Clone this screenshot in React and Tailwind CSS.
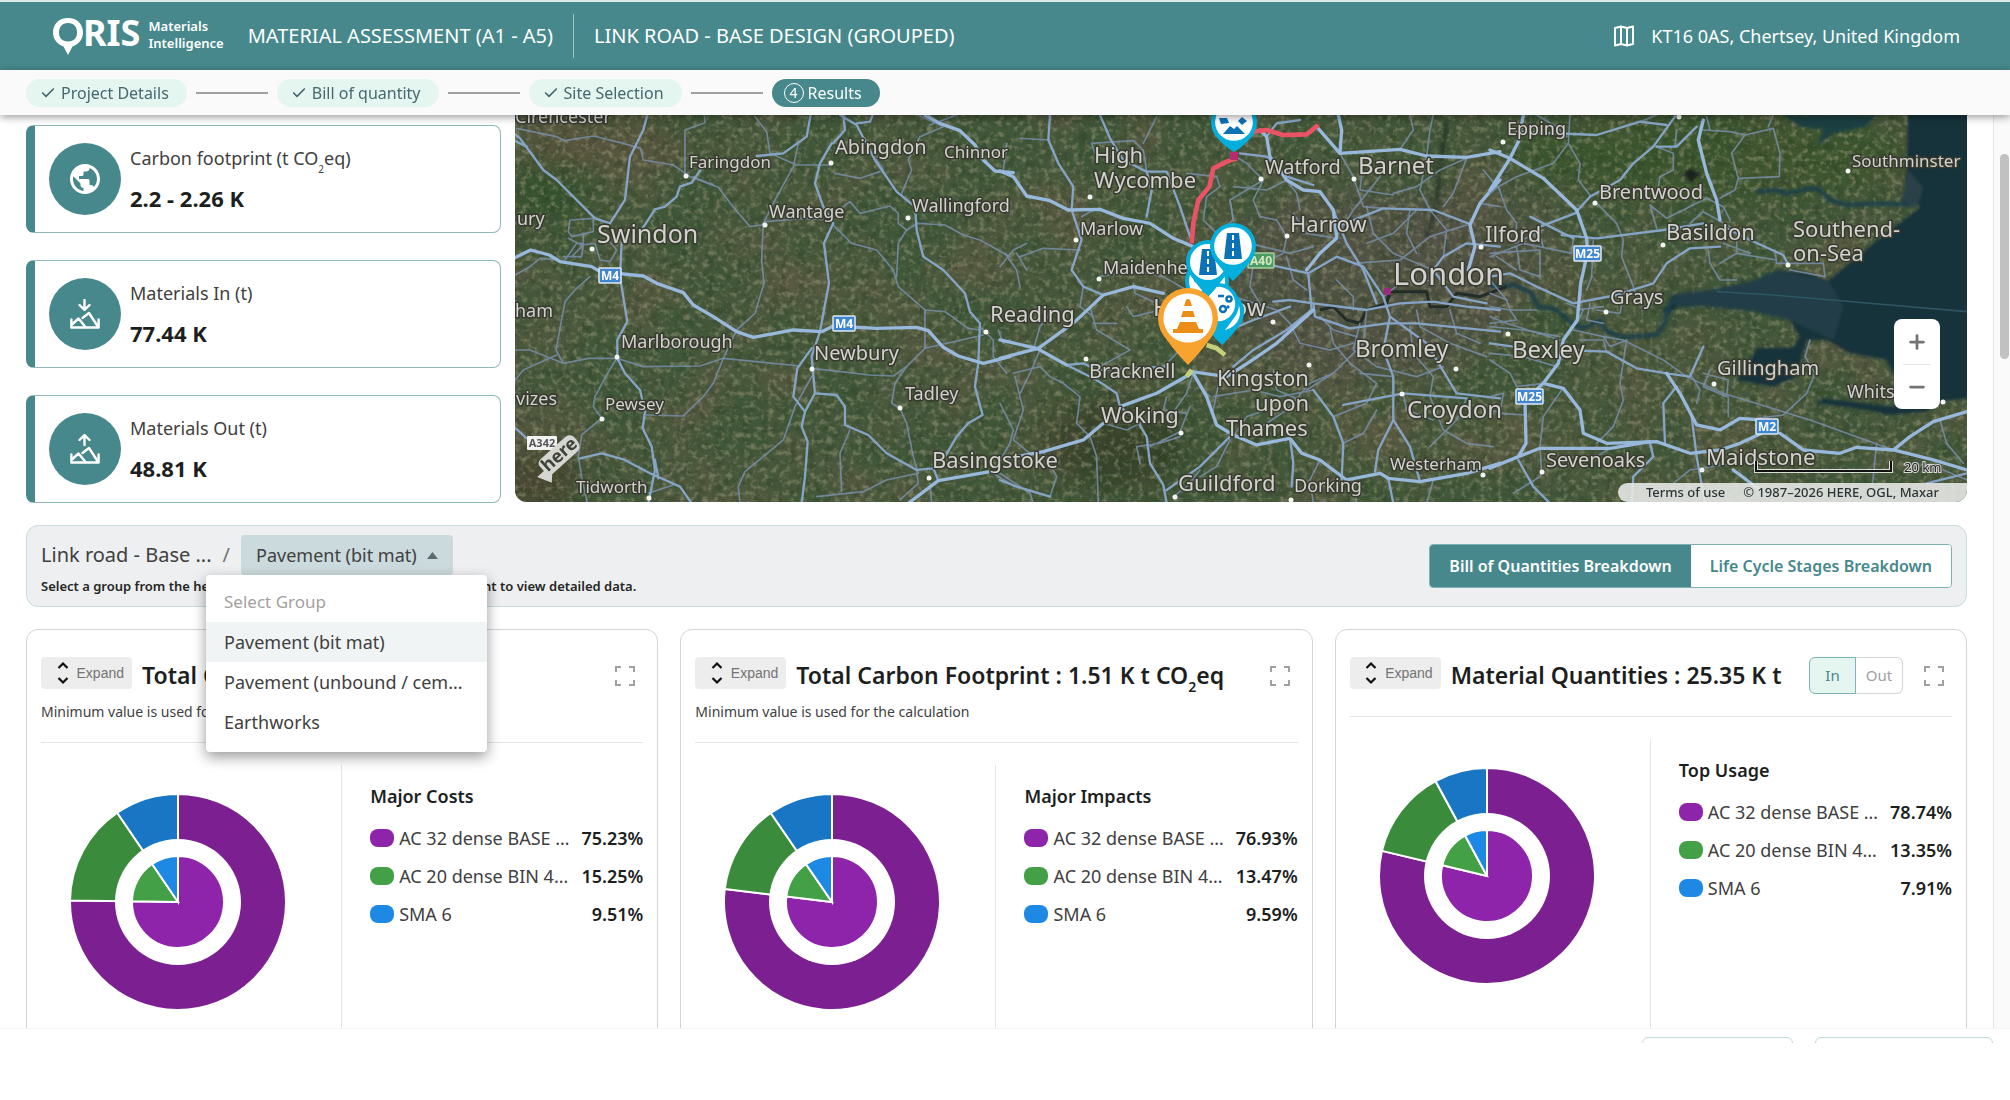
import {useState} from 'react'
import {MdPublic} from 'react-icons/md'
import {Check, Plus, Minus} from 'lucide-react'

const steps = ['Project Details', 'Bill of quantity', 'Site Selection']

const groups = ['Pavement (bit mat)', 'Pavement (unbound / cement)', 'Earthworks']

const colors = [
  { outer: '#7b1f91', inner: '#8e24aa', dot: 'bg-[#8e24aa]' },
  { outer: '#3b8b3d', inner: '#43a047', dot: 'bg-[#43a047]' },
  { outer: '#1976c5', inner: '#1e88e5', dot: 'bg-[#1e88e5]' },
]

const materials = ['AC 32 dense BASE 40/60', 'AC 20 dense BIN 40/60', 'SMA 6']

const CO2 = () => <>CO<sub className="text-[10px] leading-none -bottom-2">2</sub></>

const charts = [
  { id: 'cost', title: 'Total Cost : 1.2 M £', note: true, legend: 'Major Costs', values: [75.23, 15.25, 9.51] },
  { id: 'carbon', title: <>Total Carbon Footprint : 1.51 K t CO<sub className="text-sm leading-none -bottom-2">2</sub>eq</>, note: true, legend: 'Major Impacts', values: [76.93, 13.47, 9.59] },
  { id: 'quantities', title: 'Material Quantities : 25.35 K t', note: false, legend: 'Top Usage', values: [78.74, 13.35, 7.91] },
]

// [name, x, y, size class]
const places = [
  ['Cirencester', 0, 8, 'text-[18px]'],
  ['Faringdon', 174, 53, 'text-[17px]'],
  ['Abingdon', 320, 39, 'text-[20px]'],
  ['Chinnor', 429, 43, 'text-[17px]'],
  ['ury', 2, 110, 'text-[18px]'],
  ['Swindon', 82, 128, 'text-[25px]'],
  ['Wantage', 254, 103, 'text-[18px]'],
  ['Wallingford', 397, 97, 'text-[18px]'],
  ['ham', 0, 202, 'text-[18px]'],
  ['Marlborough', 106, 233, 'text-[18px]'],
  ['Newbury', 299, 245, 'text-[20px]'],
  ['vizes', 1, 290, 'text-[18px]'],
  ['Pewsey', 90, 295, 'text-[17px]'],
  ['Tadley', 390, 285, 'text-[18px]'],
  ['Tidworth', 61, 378, 'text-[17px]'],
  ['Basingstoke', 417, 353, 'text-[22px]'],
  ['Reading', 475, 207, 'text-[22px]'],
  ['High', 579, 48, 'text-[22px]'],
  ['Wycombe', 579, 73, 'text-[22px]'],
  ['Marlow', 565, 120, 'text-[18px]'],
  ['Maidenhead', 588, 159, 'text-[18px]'],
  ['Harrow', 775, 117, 'text-[22px]'],
  ['Watford', 750, 59, 'text-[20px]'],
  ['Barnet', 843, 59, 'text-[24px]'],
  ['London', 878, 170, 'text-[31px]'],
  ['Hounslow', 638, 201, 'text-[24px]'],
  ['Bracknell', 574, 263, 'text-[20px]'],
  ['Woking', 586, 308, 'text-[22px]'],
  ['Kingston', 702, 271, 'text-[22px]'],
  ['upon', 740, 296, 'text-[22px]'],
  ['Thames', 711, 321, 'text-[22px]'],
  ['Bromley', 840, 242, 'text-[24px]'],
  ['Croydon', 892, 303, 'text-[24px]'],
  ['Westerham', 875, 355, 'text-[17px]'],
  ['Guildford', 663, 376, 'text-[22px]'],
  ['Dorking', 779, 377, 'text-[18px]'],
  ['Ilford', 970, 127, 'text-[22px]'],
  ['Epping', 992, 20, 'text-[18px]'],
  ['Southminster', 1337, 52, 'text-[17px]'],
  ['Brentwood', 1084, 84, 'text-[20px]'],
  ['Basildon', 1151, 125, 'text-[22px]'],
  ['Southend-', 1278, 122, 'text-[22px]'],
  ['on-Sea', 1278, 146, 'text-[22px]'],
  ['Grays', 1095, 189, 'text-[20px]'],
  ['Bexley', 997, 243, 'text-[24px]'],
  ['Gillingham', 1202, 260, 'text-[20px]'],
  ['Whitstable', 1332, 283, 'text-[18px]'],
  ['Maidstone', 1191, 350, 'text-[22px]'],
  ['Sevenoaks', 1031, 352, 'text-[20px]'],
]

const towns = [
  [171, 61], [316, 48], [77, 134], [250, 110], [393, 103], [102, 242], [297, 254], [87, 304], [385, 293],
  [134, 383], [414, 363], [471, 217], [575, 82], [561, 125], [584, 164], [746, 64], [839, 64],
  [772, 121], [571, 244], [666, 318], [794, 250], [887, 279], [941, 254], [758, 207], [968, 360], [776, 385],
  [660, 382], [966, 132], [988, 27], [1164, 2], [1333, 56], [1080, 88], [1148, 130], [1273, 150], [1091, 197],
  [993, 219], [1199, 269], [1187, 355], [1027, 357], [1428, 287],
]

const shields = [
  ['M4', 84, 153, 22], ['M4', 318, 201, 22], ['M25', 1059, 131, 27], ['M25', 1001, 274, 27], ['M2', 1241, 304, 22],
]

// Roads are kept per map tile, each tile is 500 units wide at three times the map scale
const tiles = [
  {
    x: -5,
    major: [
      'M0 450 62 420 118 435 150 455 245 470 270 485 400 498 440 520 520 548 550 585 610 620 680 665 730 682 850 660 935 665 970 648 1100 655 1220 652 1255 662 1300 712 1345 738 1420 760 1500 740',
      'M1245 15 1290 40 1350 62 1395 105 1420 150 1455 183 1510 188',
      'M1195 1180 1285 1112 1440 1085',
    ],
    medium: [
      'M0 60 30 85 100 180 140 210 255 325 300 340 345 270 360 140 400 60 412 15',
      'M0 85 50 110',
      'M395 360 435 298 465 290 500 260 510 230 545 218 575 175',
      'M335 400 330 500 352 635 322 690 322 745 345 790 390 840 405 905 398 955 425 1010 435 1080 415 1180',
      'M965 100 930 160 915 220 940 290 970 340 942 400 957 520 930 665 905 740 915 850 885 905 875 950 893 995 885 1100 875 1180',
      'M740 138 820 130 890 80 902 15',
      'M990 15 1040 45 1095 150 1160 245 1215 290 1220 360 1240 440 1300 480 1365 550 1380 605 1410 640 1405 760 1395 830 1418 915 1375 940 1340 980 1305 1040',
      'M905 715 862 775 850 860 885 905M915 850 980 855 1005 890 1005 945 1075 975 1130 1030 1220 1080 1270 1075 1285 1112',
      'M210 1045 275 1030 340 1048 420 1090 510 1130 545 1180M435 1050 445 1105M0 940 50 985 M970 100 1005 60 1000 15M1040 40 1080 35 1088 15',
    ],
    minor: [
      'M20 55 140 80 165 92 250 78 340 100 392 115 400 150 490 165 540 200 625 232 665 285 720 350 755 345 765 335 880 325 960 330 1000 290 1020 275 1050 310 1140 288 1165 310 1165 340 1190 360 1225 340 1305 345 1360 375 1410 390 1500 440',
      'M525 195 525 60 585 38 583 15M735 20 770 65 780 130 860 165 960 165M865 100 850 170 795 270 760 340 755 450 762 520 735 610 680 660 640 745',
      'M185 330 250 325 250 365 185 380 175 365 180 330M175 385 215 405 255 400 270 450 300 455 320 420 290 385M165 450 200 400 220 400M185 440 220 405 215 440 160 440M220 370 220 400M240 500 195 540 165 575 150 655 138 720 160 760 235 745 320 745 400 770 570 768 640 745 870 768 M905 775 1080 795 1150 798 1190 770 1245 715 1420 675M15 720 60 720 160 760M15 810 40 780 140 735',
      'M15 495 60 470 90 445 150 450M320 745 290 795 255 860 250 890 275 925 215 975 205 1040 215 1100 232 1180M640 745 610 820 580 860 520 918 410 915M905 800 855 890 820 990 705 1085 685 1130 690 1180M970 345 1025 400 1100 420 1150 480 1165 530 1245 600 1245 715M1245 600 1305 605 1375 655 1410 660M1190 360 1165 400 1160 500M975 190 1050 205 1110 185M1100 150 1120 180M1225 15 1300 50 1230 80 1195 150 1205 180 1175 250M1260 45 1340 15',
      'M1190 770 1155 820 1145 880 1170 895 1190 940 1210 1040 1225 1090 1130 1110 1060 1145 920 1160M1220 1080 1225 1120 1170 1170M1020 960 990 1030 995 1145M1410 650 1450 690 1450 740 1490 790M1465 660 1480 700 1500 690M415 1150 490 1125M1260 1120 1265 1180M1440 1085 1500 1120M550 200 610 225',
    ],
  },
  {
    x: 485,
    major: [
      'M0 183 40 200 80 258 150 272 205 300 300 298 370 325 450 340 520 385 580 410',
      'M0 745 115 715 225 635 310 555 400 530 490 550',
      'M780 60 800 80 810 140 860 210 910 240 960 245 1000 300 1010 380M1010 385 960 430 920 480',
      'M950 50 1020 130 1200 118 1280 138 1400 142 1500 125M1020 130 1025 60 1015 15',
      'M1500 210 1440 280 1410 345 1425 410 1405 480M580 790 620 860 650 945 700 975 770 1005 870 985 905 1030 960 1050 1040 1110 1140 1090 1165 1105 1260 1115 1400 1090 1500 1060',
      'M575 790 470 850 360 890 M575 785 680 800 750 755 830 700 940 600M310 940 250 990 130 1025 0 1050M0 690 110 715 200 765',
    ],
    medium: [
      'M300 15 330 85 370 150 440 185 500 185 540 290 570 380M440 185 455 240 440 320M150 15 145 90 175 160 220 230 215 300 245 390 215 480 250 530 310 555',
      'M820 575 870 570 940 580 1100 600 1200 580 1300 575 1400 590 1500 600M940 580 945 620 1050 655 1160 640 1250 640 1500 665M690 660 760 630 870 590',
      'M790 460 925 490 935 600 860 660 760 720 700 770M925 490 1010 440 1090 470 1150 560 1170 620 1150 720 1180 800 1180 930 1135 1020 1125 1085M1165 1105 1180 1180M940 840 1000 920 1030 1000 1025 1110',
      'M200 765 250 760 290 780 500 770M360 890 350 850 290 810 200 765M360 890 410 930 440 980 450 1060 490 1125 500 1180M0 1110 50 1130 150 1160M800 80 830 40 900 30M500 1140 600 1070 690 980M870 985 880 1060 875 1130',
      'M1000 300 1040 400 1090 480 1130 580M1405 340 1300 300 1150 295 1010 350M1180 930 1230 1010 1260 1115M720 130 800 140 860 200 940 225M1500 410 1400 400 1330 440 1300 480 1360 560 1460 580M1170 620 1280 700 1370 850 1500 865M1030 885 1210 850 1400 865',
    ],
    minor: [
      'M20 100 10 180M150 90 60 85M275 100 400 92 430 120 440 185M275 100 285 130M470 20 430 100M560 190 650 200 660 230 620 260 610 330 650 370 700 330 690 270 740 240 790 210M690 130 740 160 790 210 760 270 780 320 830 330 860 380 850 430 790 460M1020 130 1060 200 1090 290 1150 295M1150 150 1140 200 1060 300 1010 380M860 210 800 240 700 230M900 300 890 250 860 210M880 310 920 370 1010 385M940 410 870 430 750 400',
      'M1280 140 1260 240 1290 300 1340 360 1330 440M1400 145 1360 250 1330 290M1200 118 1240 60 1230 15M1300 15 1290 60 1280 140M1100 290 1120 370 1180 430 1300 480M1180 250 1250 230 1320 180 1400 145M1100 400 1180 370 1250 300M1060 460 1200 450 1290 380 1400 345M1230 300 1220 370 1250 430M1450 180 1500 240M1440 280 1500 290M1090 160 1080 240 1180 255',
      'M45 800 70 900 40 990 90 1030 130 1025M40 790 120 770 150 800 190 820 240 860 230 940 270 980 290 1040 295 1180M120 720 90 790 60 850M100 720 120 650 160 600M270 590 290 660 390 720 300 770M400 520 405 550 470 580 490 600 M250 530 240 590 280 620M15 430 50 480 60 530M60 440 130 415 240 420M300 500 400 480 490 500 560 540M80 480 50 430',
      'M480 780 560 700M500 860 490 900 560 910M510 920 560 850 580 790M640 860 760 840 840 860 940 840M770 960 860 900 930 820 1000 790M820 780 830 840 900 870M700 980 740 920 800 900M630 860 600 830M450 1010 540 965 570 890M540 980 480 1000 410 1010 420 1060M600 1080 560 1130 520 1160M690 990 650 1070 600 1100M1000 920 1100 880 1130 820 1050 760 1000 700 990 650M1080 640 1060 720 1130 770 1250 800 1330 770M1230 650 1240 730 1300 800 1290 860 1330 960 1400 1000 1480 1010',
      'M960 620 1000 660 1070 680M1150 560 1200 520 1300 510M1100 600 1090 700 1000 790 920 840M870 640 900 700 990 720 1060 700M1250 600 1260 650 1350 700 1460 740M1350 600 1370 670 1440 700M1180 800 1080 790M1210 850 1220 900 1300 930M1400 865 1370 930 1290 1010M1030 1000 1090 970 1130 900M1300 1110 1280 1180M1070 1180 1060 1110M960 1050 930 1110 940 1180M1010 510 1060 560 1060 600M580 640 560 690M700 560 830 600 880 650',
      'M0 880 40 960 30 1000 0 1050M130 1025 170 1100 150 1160M0 1090 90 1150 100 1180M310 940 380 960 440 930M660 800 640 900M760 460 750 530 790 600M860 440 880 510 920 540M690 270 700 330M0 470 40 420 80 400M245 320 280 300M380 590 400 620 480 600M350 640 280 640',
    ],
  },
  {
    x: 975,
    major: [
      'M0 120 60 145 160 205 260 300 290 385 292 430 272 520 262 630 220 690 205 760 160 820 220 835 270 900 280 970 350 1000 500 995 600 1030 690 1020 750 1000 815 970',
      'M160 820 105 870 108 1000 85 1040 0 1075M85 1040 150 1015 360 1015 480 995',
      'M530 790 570 850 620 945 690 960 750 925 815 930M870 970 940 1020 1050 1030 1100 1012 1210 1020 1330 1050 1431 1080M1210 1020 1260 980 1330 935 1431 905M0 240 60 145 85 95 100 15',
      'M640 30 625 90 650 190 680 270 690 330M730 1080 810 1140',
    ],
    medium: [
      'M80 65 320 75 450 35 530 45M555 20 490 110 430 160 390 210 300 260 255 310 150 350M215 375 320 385 520 360 640 340M530 790 440 775 350 725 220 720M700 350 780 390 880 435 895 465',
      'M120 320 180 350 250 385M690 410 600 415 530 460 490 520 380 555 250 580 140 530 60 490 0 500M85 1050 130 1130 180 1180M605 920 620 1040 645 1180M620 50 560 110 500 110M1310 1120 1431 1090M480 1000 490 1040 430 1100 425 1180M525 1000 520 880 560 830M640 710 600 800 530 790M0 700 70 710',
    ],
    minor: [
      'M240 15 235 100 270 160 265 210 300 255M25 230 50 300 80 340 75 400 160 360M235 100 190 160 80 200 25 230 0 250M320 280 380 340 400 390 395 440 430 530 440 560M480 285 500 355M480 285 530 325 650 265 700 290 720 330M600 340 640 305 720 350M640 60 720 65 765 75 850 55 870 130 868 200 745 205 725 130 765 75M745 205 735 240 690 265M850 15 835 50M500 110 550 130 550 180 510 200 500 260',
      'M250 385 245 430 100 400 0 440M80 410 90 480 150 500 150 420 0 430M20 440 80 480M0 510 50 570 60 600 140 600M310 390 305 500 290 540M320 600 390 610 400 560M300 580 290 630 340 640M340 590 260 600M250 660 340 680 400 690 440 710 520 750 590 800 700 850 960 930 1210 1020M655 420 660 460 690 510 740 510M690 460 740 430 740 360M740 430 860 450M855 420 860 460 1000 460 1005 500 900 480M700 400 780 430',
      'M340 680 360 710 410 690 390 820 400 870 370 950 320 1000M215 840 160 920 150 1010 155 1090M40 850 30 910 105 915M0 860 40 850M0 900 40 910M600 790 630 840 620 880M660 780 640 830 710 860 715 810 640 790M715 860 715 920M960 690 945 740 975 790 950 850 880 915 800 925M1160 1000 1150 1100 1140 1180M1350 930 1370 1000 1420 1060M200 770 100 740 0 730M350 725 340 690 270 690M210 680 100 660 0 650M360 1015 320 1040 290 1050M1431 1110 1360 1080M155 1090 150 1100 70 1150M550 1120 600 1080 730 1060',
      'M0 550 50 570M0 590 60 600 80 630 0 640M0 620 50 640 210 690M140 15 200 50 230 80M650 20 660 60M450 35 500 15M560 60 555 110M0 750 60 790 80 830 160 820M160 410 150 380M230 580 280 600 260 640',
    ],
  },
]

const Mountains = ({ up }) => (
  <svg className="w-[30px] h-[30px]" viewBox="0 0 30 30" fill="none" stroke="currentColor" strokeWidth="2.4" strokeLinecap="round" strokeLinejoin="round">
    <path d="M1.4 20.5v8h27.2v-8" />
    <path d="M2.5 25 8.500 19.500 15.500 28M12.500 19 19 14l8.500 13" />
    <path d={up ? 'M14.500 11V1.500M9.500 6l5-4.800 5 4.800' : 'M14.500 1v9.500M9.500 6l5 4.800 5-4.800'} />
  </svg>
)

const stats = [
  { label: <>Carbon footprint (t <CO2 />eq)</>, value: '2.2 - 2.26 K', icon: <MdPublic className="w-9 h-9" /> },
  { label: 'Materials In (t)', value: '77.44 K', icon: <Mountains /> },
  { label: 'Materials Out (t)', value: '48.81 K', icon: <Mountains up /> },
]

const Pin = ({ x, y, r, tip, color, children }) => (
  <g transform={`translate(${x} ${y})`}>
    <path d={`M${-r * 0.92} ${r * 0.4}Q${-r * 0.6} ${r * 0.95} 0 ${tip}Q${r * 0.6} ${r * 0.95} ${r * 0.92} ${r * 0.4}Z`} fill={color} />
    <circle r={r} fill={color} />
    <circle r={r * 0.82} fill="#fff" />
    {children}
  </g>
)

const RoadGlyph = () => (
  <g>
    <path d="M-6-13H6L9 13H-9Z" fill="#0b72b5" />
    <path d="M0-11v5M0-3v5M0 5v5" stroke="#fff" strokeWidth="2" />
  </g>
)

const MapView = () => (
  <svg className="block w-full h-full font-['Noto_Sans',sans-serif]" viewBox="0 0 1452 387" preserveAspectRatio="xMidYMid slice" role="img" aria-label="Map of sites">
    <defs>
      <filter id="fields" x="0" y="0" width="100%" height="100%" colorInterpolationFilters="sRGB">
        <feTurbulence type="fractalNoise" baseFrequency="0.014" numOctaves="4" seed="8" />
        <feColorMatrix values="0 0 0 0 .36  0 0 0 0 .35  0 0 0 0 .26  2 0 0 0 -.75" />
      </filter>
      <filter id="grain" x="0" y="0" width="100%" height="100%" colorInterpolationFilters="sRGB">
        <feTurbulence type="fractalNoise" baseFrequency="0.17" numOctaves="3" seed="3" />
        <feColorMatrix values="0 0 0 0 .6  0 0 0 0 .6  0 0 0 0 .48  0 3.4 0 0 -1.65" />
      </filter>
      <filter id="woods" x="0" y="0" width="100%" height="100%" colorInterpolationFilters="sRGB">
        <feTurbulence type="fractalNoise" baseFrequency="0.11" numOctaves="3" seed="21" />
        <feColorMatrix values="0 0 0 0 .16  0 0 0 0 .24  0 0 0 0 .14  0 0 3 0 -1.4" />
      </filter>
      <filter id="soft"><feGaussianBlur stdDeviation="14" /></filter>
      <filter id="shore"><feGaussianBlur stdDeviation="4" /></filter>
    </defs>
    <rect width="1452" height="387" fill="#415739" />
    <rect width="1452" height="387" filter="url(#fields)" />
    <g filter="url(#soft)">
      <ellipse cx="850" cy="170" rx="150" ry="95" fill="#545146" opacity=".75" />
      <ellipse cx="970" cy="130" rx="80" ry="60" fill="#545146" opacity=".6" />
      <ellipse cx="90" cy="30" rx="90" ry="25" fill="#5b533d" opacity=".6" />
      <ellipse cx="600" cy="330" rx="70" ry="45" fill="#2c3a22" opacity=".7" />
      <ellipse cx="20" cy="365" rx="45" ry="30" fill="#4b4731" opacity=".9" />
      <ellipse cx="35" cy="80" rx="45" ry="30" fill="#2f512c" opacity=".8" />
      <ellipse cx="1200" cy="40" rx="200" ry="45" fill="#39542b" opacity=".7" />
    </g>
    <rect width="1452" height="387" filter="url(#woods)" opacity=".4" />
    <rect width="1452" height="387" filter="url(#grain)" opacity=".5" />
    <g transform="translate(975 -5) scale(.3333)">
      <g filter="url(#shore)">
        <path d="M1255-20 1250 180 1240 260 1290 290 1240 330 1150 400 1015 512 950 490 860 480 780 515 660 540 550 553 520 600 530 620 560 592 640 588 780 602 900 630 930 680 910 712 800 715 780 750 740 810 850 830 920 800 950 690 1010 690 1080 730 1190 750 1215 800 1215 890 1000 865 980 880 1130 900 1200 915 1310 905 1350 875 1460 862V-20Z" fill="#12303a" />
        <path d="M860 480 780 515 660 540 550 553 560 592 640 588 780 602 900 630 1030 690 1060 590 1015 512Z" fill="#213e47" />
        <path d="M1255 180 1300 235 1280 290 1230 290Z" fill="#2a4247" />
        <path d="M800 245 860 240 890 250 960 235 990 240 1020 270 1070 285 1180 280 1260 285M0 530 70 525 120 545 145 590 200 600 245 640 280 655 330 630 350 665 400 682 500 675 525 640 535 590 560 565" fill="none" stroke="#1d3f48" strokeWidth="13" strokeLinejoin="round" />
        <path d="M880 15 930 50 1000 60 980 110 1030 70 1130 50 1160 15Z" fill="#1d3f42" />
        <path d="M580 195 600 175 630 190 605 218Z" fill="#1c211d" />
      </g>
      <path d="M680 545 850 555 1431 605" fill="none" stroke="#2c5661" strokeWidth="5" />
    </g>
    <g transform="translate(485 -5) scale(.3333)" fill="none" stroke="#232d28" strokeLinejoin="round">
      <path d="M960 600 1000 590 1040 630 1080 640 1100 600 1160 580 1170 545 1280 545 1290 590 1340 590 1370 550 1440 560 1520 530" strokeWidth="9" />
      <path d="M1340 40 1320 180 1310 280 1280 380" stroke="#1f2a20" strokeWidth="14" opacity=".6" filter="url(#shore)" />
    </g>
    {tiles.map(tile => (
      <g key={tile.x} transform={`translate(${tile.x} -5) scale(.3333)`} fill="none" strokeLinejoin="round" strokeLinecap="round">
        {tile.minor.map(d => <path key={d} d={d} stroke="#788ea8" strokeWidth="5" opacity=".85" />)}
        {tile.medium.map(d => <path key={d} d={d} stroke="#86a5c6" strokeWidth="7" />)}
        {tile.major.map(d => <path key={d} d={d} stroke="#98b8dc" strokeWidth="10" />)}
      </g>
    ))}
    <g transform="translate(485 -5) scale(.3333)" fill="none" strokeLinejoin="round" strokeWidth="14">
      <path d="M710 145 680 155 640 175 628 230 595 270 580 340 575 400M760 65 800 60 850 75 920 73 955 45" stroke="#ea5365" />
      <path d="M620 705 650 715 675 735M575 780 560 800" stroke="#c5cf79" />
    </g>
    <rect x="715" y="37" width="8" height="8" fill="#b52b6b" />
    <rect x="869" y="173" width="7" height="7" fill="#9c2a7d" />
    {towns.map(([x, y]) => <circle key={`${x}-${y}`} cx={x} cy={y} r="2.500" fill="#f4f4f2" />)}
    <g fill="#d2d2ce" stroke="#38392f" strokeWidth="3" paintOrder="stroke" strokeLinejoin="round">
      {places.map(([name, x, y, size]) => <text key={name} x={x} y={y} className={size}>{name}</text>)}
    </g>
    {shields.map(([name, x, y, w]) => (
      <g key={`${name}-${x}`}>
        <rect x={x} y={y} width={w} height="15" rx="1" fill="#3f86d2" stroke="#dfe8ef" strokeWidth="1.500" />
        <text x={x + w / 2} y={y + 12} textAnchor="middle" fill="#fff" className="text-[12px] font-bold">{name}</text>
      </g>
    ))}
    <rect x="733" y="138" width="26" height="15" rx="1" fill="#4d9c67" stroke="#a9cf9c" strokeWidth="1.500" />
    <text x="746" y="150" textAnchor="middle" fill="#d5e8bd" className="text-[12px] font-bold">A40</text>
    <rect x="12" y="321" width="30" height="14" rx="1" fill="#f2f2f0" />
    <text x="27" y="332" textAnchor="middle" fill="#55565a" className="text-[11px] font-bold">A342</text>
    <g transform="translate(33 359) rotate(-42)">
      <path d="M-10-5H-1V-12Q0-16 5-16H38Q45-15 44-7 44 2 38 3H3L-3 9Z" fill="#d5d6d1" />
      <text x="1" y="-1" fill="#3c4438" className="text-[18px] font-bold">here</text>
    </g>

    <Pin x={719} y={7} r={23} tip={30} color="#04aedd">
      <path d="M-11 12-4 4 0 7 3 4 11 12ZM-15-4l8 0 2 5-8 1ZM8-5l5 4-5 4-4-4Z" fill="#0b72b5" />
    </Pin>
    <Pin x={692} y={166} r={22} tip={36} color="#04aedd">
      <path d="M-12-2a3 3 0 1 0 6 0M4 8h8" fill="none" stroke="#0b72b5" strokeWidth="2.500" />
    </Pin>
    <Pin x={707} y={197} r={22} tip={33} color="#04aedd" />
    <Pin x={703} y={189} r={21} tip={34} color="#04aedd">
      <g fill="none" stroke="#0b72b5" strokeWidth="2.500">
        <circle cx="5" cy="5" r="3" />
        <circle cx="11" cy="-5" r="2.500" />
        <path d="M0-8h6M9 2l2 2" />
      </g>
    </Pin>
    <Pin x={693} y={147} r={22} tip={35} color="#04aedd"><RoadGlyph /></Pin>
    <Pin x={718} y={131} r={23} tip={35} color="#04aedd"><RoadGlyph /></Pin>
    <Pin x={673} y={203} r={30} tip={47} color="#f8a32f">
      <path d="M-2-18Q0-20 2-18L4-12H-4ZM-5-7H5L7-1H-7ZM-8 4H8L11 11H15V15H-15V11H-11Z" fill="#ec8d18" />
    </Pin>

    <path d="M1241 346v10h135v-10" fill="none" stroke="#fff" strokeWidth="4" opacity=".8" />
    <path d="M1241 346v10h135v-10" fill="none" stroke="#111" strokeWidth="2" />
    <text x="1389" y="357" fill="#222" stroke="#d9d9d9" strokeWidth="2" paintOrder="stroke" className="text-[13px]">20 km</text>
  </svg>
)

const Donut = ({ values }) => {
  const total = values.reduce((a, b) => a + b, 0)
  const point = (part, r) => {
    const a = part / total * Math.PI * 2
    return `${107 + r * Math.sin(a)} ${107 - r * Math.cos(a)}`
  }
  const slice = (i, r) => {
    const start = values.slice(0, i).reduce((a, b) => a + b, 0)
    const end = start + values[i]
    return `M107 107L${point(start, r)}A${r} ${r} 0 ${values[i] / total > 0.5 ? 1 : 0} 1 ${point(end, r)}Z`
  }
  return (
    <svg className="w-[214px] h-[214px] overflow-visible" viewBox="0 0 214 214" aria-hidden="true">
      {values.map((v, i) => <path key={i} d={slice(i, 108)} fill={colors[i].outer} stroke="#fff" strokeWidth="2" />)}
      <circle cx="107" cy="107" r="63" fill="#fff" />
      {values.map((v, i) => <path key={i} d={slice(i, 46)} fill={colors[i].inner} stroke="#fff" strokeWidth="2" />)}
    </svg>
  )
}

const ChartCard = ({ chart }) => {
  const [flow, setFlow] = useState('In')

  return (
    <section className="h-[520px] rounded-xl border border-neutral-300 bg-white px-[14px] pt-[27px]">
      <div className="flex items-start">
        <button type="button" className="flex h-8 w-[91px] shrink-0 items-center justify-end gap-2 rounded-sm bg-[#ededed] pr-2 font-['Liberation_Sans',sans-serif] text-sm text-neutral-500">
          <svg className="w-3 h-[26px]" viewBox="0 0 12 26" fill="none" stroke="#111" strokeWidth="2.200">
            <path d="M1.500 8 6 3.500 10.500 8M1.500 18 6 22.500 10.500 18" />
          </svg>
          Expand
        </button>
        <h2 className="ml-[10px] flex-1 truncate text-[23px] leading-[37px] font-semibold text-[#1d1f1f]">{chart.title}</h2>
        {!chart.note && (
          <div className="mr-5 flex h-[37px] text-[15px]">
            {['In', 'Out'].map(name => (
              <button
                key={name}
                type="button"
                aria-pressed={flow === name}
                onClick={() => setFlow(name)}
                className={`w-[47px] border first:rounded-l-md last:rounded-r-md ${
                  flow === name ? 'border-[#7db3b3] bg-[#e5f5f0] text-[#46888b]' : 'border-neutral-300 border-l-0 text-neutral-400'
                }`}
              >
                {name}
              </button>
            ))}
          </div>
        )}
        <button type="button" aria-label="Full screen" className="mr-[7px] flex h-[37px] items-center text-neutral-400">
          <svg className="w-[22px] h-[22px]" viewBox="0 0 22 22" fill="none" stroke="currentColor" strokeWidth="2">
            <path d="M2 7V2h5M15 2h5v5M20 15v5h-5M7 20H2v-5" />
          </svg>
        </button>
      </div>
      {chart.note && <p className="mt-2 text-sm leading-5 text-neutral-700">Minimum value is used for the calculation</p>}
      <hr className={chart.note ? 'mt-5 border-neutral-200' : 'mt-[22px] border-neutral-200'} />
      <div className="mt-[22px] grid h-[320px] grid-cols-2">
        <div className="border-r border-neutral-200 p-[30px]">
          <Donut values={chart.values} />
        </div>
        <div className="pt-[18px] pl-7">
          <h3 className="text-[18px] leading-[26px] font-semibold text-[#1d1f1f]">{chart.legend}</h3>
          <ul className="mt-[10px]">
            {chart.values.map((value, i) => (
              <li key={i} className="flex h-[38px] items-center text-[18px]">
                <span className={`mr-[5px] h-[18px] w-6 shrink-0 rounded-lg ${colors[i].dot}`}></span>
                <span className="w-[172px] truncate text-neutral-700">{materials[i]}</span>
                <span className="ml-auto font-semibold text-[#1d1f1f]">{value}%</span>
              </li>
            ))}
          </ul>
        </div>
      </div>
    </section>
  )
}

const GroupSelect = () => {
  const [open, setOpen] = useState(true)
  const [group, setGroup] = useState(groups[0])

  return (
    <div className="relative">
      <button
        type="button"
        aria-haspopup="menu"
        aria-expanded={open}
        onClick={() => setOpen(!open)}
        className="flex h-10 items-center gap-[10px] rounded-sm bg-[#cbdadd] px-[15px] text-[18px] text-neutral-700"
      >
        {group}
        <svg className="w-[11px] h-[7px]" viewBox="0 0 11 7" fill="#5b6b70"><path d="M5.500 0 11 7H0Z" /></svg>
      </button>
      {open && (
        <div role="menu" className="absolute top-10 -left-[35px] z-20 w-[281px] rounded-sm bg-white pt-[7px] pb-[10px] text-[18px] text-neutral-700 shadow-[0_5px_14px_rgba(0,0,0,0.4)]">
          <p className="h-10 px-[18px] text-[17px] leading-10 text-neutral-400">Select Group</p>
          {groups.map(name => (
            <button
              key={name}
              type="button"
              role="menuitem"
              onClick={() => { setGroup(name); setOpen(false) }}
              className={`block h-10 w-full truncate pr-6 pl-[18px] text-left ${name === group ? 'bg-[#f0f4f5]' : ''}`}
            >
              {name}
            </button>
          ))}
        </div>
      )}
    </div>
  )
}

const App = () => {
  const [tab, setTab] = useState('Bill of Quantities Breakdown')

  return (
    <div className="flex h-screen flex-col bg-white font-['Noto_Sans',sans-serif]">
      <header className="flex h-[70px] shrink-0 items-center border-t-2 border-[#d9eaea] bg-[#46888b] pl-[53px] pr-[50px] text-white">
        <div className="flex items-start gap-2">
          <div className="flex items-start font-bold">
            <svg className="h-[37px] w-[30px]" viewBox="0 0 30 37" fill="currentColor">
              <path fillRule="evenodd" d="M15 0C6 0 0 6 0 14.500 0 21 4 26 10.500 28.500L15 37l4.500-8.500C26 26 30 21 30 14.500 30 6 24 0 15 0Zm0 5c6 0 9 4 9 9.500S21 23.500 15 23.500 6 20 6 14.500 9 5 15 5Z" />
            </svg>
            <span className="text-[36px] leading-[29px]">RIS</span>
          </div>
          <p className="text-[13px] leading-[17px] font-semibold">Materials<br />Intelligence</p>
        </div>
        <h1 className="ml-6 text-[20px]">MATERIAL ASSESSMENT (A1 - A5)</h1>
        <span className="mx-5 h-11 w-px bg-white/50"></span>
        <p className="text-[20px]">LINK ROAD - BASE DESIGN (GROUPED)</p>
        <p className="ml-auto flex items-center gap-4 text-[18px]">
          <svg className="w-[22px] h-[22px]" viewBox="0 0 22 22" fill="none" stroke="currentColor" strokeWidth="2" strokeLinejoin="round">
            <path d="M2 3 8 1.500 14 3 20 1.500V19l-6 1.500L8 19 2 20.500ZM8 1.500V19M14 3v17.500" />
          </svg>
          KT16 0AS, Chertsey, United Kingdom
        </p>
      </header>

      <nav aria-label="Progress" className="relative z-10 flex h-[45px] shrink-0 items-center gap-[9px] bg-[#fafafa] pl-[26px] text-[16px] shadow-[0_2px_8px_rgba(0,0,0,0.4)]">
        {steps.map(step => (
          <div key={step} className="flex items-center gap-[9px]">
            <a href="#" className="flex h-7 items-center gap-[5px] rounded-full bg-[#e5f5f0] pl-[14px] pr-[18px] text-[#44696f]">
              <Check className="w-4 h-4" strokeWidth={2.5} />
              {step}
            </a>
            <span className="h-0.5 w-[72px] bg-neutral-400"></span>
          </div>
        ))}
        <a href="#" aria-current="step" className="flex h-7 items-center gap-1 rounded-full bg-[#46888b] pl-3 pr-[18px] text-white">
          <span className="flex h-5 w-5 items-center justify-center rounded-full border border-white text-[14px]">4</span>
          Results
        </a>
      </nav>

      <div className="flex min-h-0 flex-1">
        <main className="min-w-0 flex-1 overflow-hidden px-[26px]">
          <div className="flex gap-[14px]">
            <div className="flex w-[475px] shrink-0 flex-col gap-[27px] pt-[10px]">
              {stats.map((stat, i) => (
                <div key={i} className="flex h-[108px] items-center rounded-lg border border-l-[9px] border-[#46888b]/60 border-l-[#46888b] pl-[14px]">
                  <div className="flex h-[72px] w-[72px] items-center justify-center rounded-full bg-[#46888b] text-white">{stat.icon}</div>
                  <div className="ml-[9px] pb-[2px]">
                    <p className="text-[18px] leading-7 text-neutral-700">{stat.label}</p>
                    <p className="mt-3 text-[22px] leading-7 font-bold text-[#1d1f1f]">{stat.value}</p>
                  </div>
                </div>
              ))}
            </div>

            <div className="relative h-[387px] min-w-0 flex-1 overflow-hidden rounded-b-xl">
              <MapView />
              <div className="absolute right-[27px] bottom-[93px] flex w-[46px] flex-col items-center rounded-lg bg-white text-neutral-500">
                <button type="button" aria-label="Zoom in" className="flex h-[45px] w-full items-center justify-center">
                  <Plus className="w-[22px] h-[22px]" strokeWidth={3} />
                </button>
                <span className="h-px w-7 bg-neutral-200"></span>
                <button type="button" aria-label="Zoom out" className="flex h-11 w-full items-center justify-center">
                  <Minus className="w-[22px] h-[22px]" strokeWidth={3} />
                </button>
              </div>
              <div className="absolute right-0 bottom-0 flex h-[19px] items-center gap-[18px] rounded-l-full bg-[#e6e8e4]/90 pl-7 pr-7 text-[13px] font-medium text-[#2b3436]">
                <a href="#">Terms of use</a>
                <span>© 1987–2026 HERE, OGL, Maxar</span>
              </div>
            </div>
          </div>

          <section className="mt-[22px] flex h-[82px] items-center justify-between rounded-xl border border-[#c9dcde] bg-[#edeff0] px-[14px]">
            <div>
              <div className="flex items-center gap-[11px] text-[20px] text-neutral-700">
                <span>Link road - Base ...</span>
                <span className="text-neutral-500">/</span>
                <GroupSelect />
              </div>
              <p className="text-[13px] leading-[22px] font-semibold text-neutral-800">Select a group from the header dropdown or click on any chart segment to view detailed data.</p>
            </div>
            <div className="flex h-11 overflow-hidden rounded-sm border border-[#7fb0b2] text-[16px] font-semibold">
              {['Bill of Quantities Breakdown', 'Life Cycle Stages Breakdown'].map(name => (
                <button
                  key={name}
                  type="button"
                  aria-pressed={tab === name}
                  onClick={() => setTab(name)}
                  className={`px-[19px] ${tab === name ? 'bg-[#46888b] text-white' : 'bg-white text-[#46888b]'}`}
                >
                  {name}
                </button>
              ))}
            </div>
          </section>

          <div className="mt-[22px] grid grid-cols-3 gap-[22px]">
            {charts.map(chart => <ChartCard key={chart.id} chart={chart} />)}
          </div>
        </main>

        {/* scroll track */}
        <div className="w-[17px] shrink-0 border-l border-neutral-200 bg-[#fafafa] pt-[39px] pl-[6px]">
          <div className="h-[205px] w-[9px] rounded-full bg-[#c1c1c1]"></div>
        </div>
      </div>

      <footer className="h-[72px] shrink-0 border-t border-neutral-100 bg-white px-[17px] pt-2">
        <div className="flex h-[6px] justify-end gap-[22px] overflow-hidden">
          <button type="button" aria-label="Back" className="h-10 w-[151px] rounded-md border border-[#c3d9db]"></button>
          <button type="button" aria-label="Export" className="h-10 w-[178px] rounded-md border border-[#c3d9db]"></button>
        </div>
      </footer>
    </div>
  )
}
export default App
